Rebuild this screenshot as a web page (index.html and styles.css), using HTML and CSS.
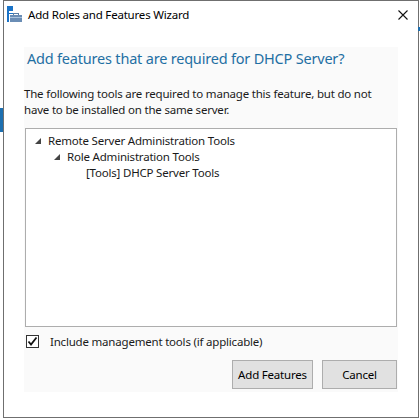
FILE: index.html
```html
<!DOCTYPE html>
<html>
<head>
<meta charset="utf-8">
<link rel="stylesheet" href="styles.css">
</head>
<body>
<div class="desk-mark mark-left"></div>
<div class="desk-mark mark-right"></div>
<div class="window">
  <div class="titlebar">
    <svg class="app-icon" width="16" height="17" viewBox="0 0 16 17">
      <rect x="0" y="0" width="6" height="5" fill="#1a73c7"/>
      <rect x="0" y="5" width="2" height="11" fill="#1a73c7"/>
      <rect x="2" y="7" width="4" height="1" fill="#1a73c7"/>
      <rect x="6" y="7" width="6" height="2" fill="#5b7fa6"/>
      <rect x="7" y="8" width="4" height="1" fill="#ffffff"/>
      <rect x="3" y="9" width="12" height="7" fill="#6a8db5"/>
      <rect x="3" y="11" width="12" height="1" fill="#a9c3de"/>
    </svg>
    <span class="title">Add Roles and Features Wizard</span>
    <svg class="close" width="10" height="10" viewBox="0 0 10 10">
      <path d="M0.5 0.5 L9.5 9.5 M9.5 0.5 L0.5 9.5" stroke="#111" stroke-width="1.1" fill="none"/>
    </svg>
  </div>
  <div class="panel">
    <h1 class="heading">Add features that are required for DHCP Server?</h1>
    <p class="intro">The following tools are required to manage this feature, but do not have to be installed on the same server.</p>
    <div class="tree">
      <div class="node level0">
        <svg class="expander" width="6" height="6" viewBox="0 0 6 6"><polygon points="6,0 6,6 0,6" fill="#444"/></svg>
        <span>Remote Server Administration Tools</span>
      </div>
      <div class="node level1">
        <svg class="expander" width="6" height="6" viewBox="0 0 6 6"><polygon points="6,0 6,6 0,6" fill="#444"/></svg>
        <span>Role Administration Tools</span>
      </div>
      <div class="node level2">
        <span>[Tools] DHCP Server Tools</span>
      </div>
    </div>
    <label class="check">
      <span class="box">
        <svg width="11" height="11" viewBox="0 0 11 11"><path d="M1.5 5.5 L4 8.5 L9.5 1.5" stroke="#111" stroke-width="1.8" fill="none"/></svg>
      </span>
      <span>Include management tools (if applicable)</span>
    </label>
    <div class="buttons">
      <button class="btn add">Add Features</button>
      <button class="btn cancel">Cancel</button>
    </div>
  </div>
</div>
</body>
</html>
```

FILE: styles.css
```css
* { box-sizing: border-box; }
html, body {
  margin: 0;
  padding: 0;
  background: #ffffff;
  width: 420px;
  height: 418px;
  overflow: hidden;
  font-family: "Noto Sans", "Segoe UI", sans-serif;
  font-size: 11.5px;
  letter-spacing: -0.2px;
  color: #1a1a1a;
}
body { position: relative; }
.desk-mark { position: absolute; }
.mark-left { left: 0; top: 108px; width: 3px; height: 24px; background: #1d6fb0; }
.mark-right { left: 418px; top: 27px; width: 2px; height: 4px; background: #1d6fb0; }

.window {
  margin-left: 3px;
  width: 416px;
  height: 418px;
  border: 1px solid #6f6f6f;
  background: #ffffff;
  display: flex;
  flex-direction: column;
}
.titlebar {
  height: 29px;
  display: flex;
  align-items: flex-start;
  padding-left: 3px;
  flex: none;
}
.app-icon { margin-top: 5px; flex: none; }
.title {
  margin-left: 5px;
  margin-top: 6px;
  line-height: 16px;
  color: #000;
}
.close { margin-left: auto; margin-right: 10px; margin-top: 9px; }

.panel {
  margin: 17px 20px 0 20px;
  height: 345px;
  background: #fafafa;
  display: flex;
  flex-direction: column;
}
.heading {
  margin: 0;
  padding: 1px 0 0 3px;
  font-weight: normal;
  font-size: 14.5px;
  line-height: 20px;
  color: #1f6fa3;
}
.intro {
  margin: 18px 0 0 0;
  line-height: 16px;
}
.tree {
  margin: 10px 0 0 1px;
  width: 372px;
  height: 199px;
  border: 1px solid #adadad;
  background: #ffffff;
  padding-top: 4px;
}
.node {
  height: 16px;
  line-height: 16px;
  display: flex;
  align-items: center;
}
.expander { flex: none; margin-right: 7px; }
.level0 { padding-left: 9px; }
.level1 { padding-left: 28px; }
.level2 { padding-left: 60px; }

.check {
  display: flex;
  align-items: center;
  margin: 8px 0 0 2px;
  height: 13px;
}
.box {
  width: 13px;
  height: 13px;
  border: 1px solid #333;
  background: #fff;
  display: flex;
  align-items: center;
  justify-content: center;
  margin-right: 11px;
  flex: none;
}
.buttons {
  display: flex;
  justify-content: flex-end;
  gap: 9px;
  margin-top: 12px;
  padding-right: 1px;
}
.btn {
  height: 29px;
  border: 1px solid #adadad;
  background: #e1e1e1;
  font-family: inherit;
  font-size: 11.5px;
  letter-spacing: -0.2px;
  color: #000;
  padding: 0;
}
.add { width: 81px; }
.cancel { width: 75px; }
```
